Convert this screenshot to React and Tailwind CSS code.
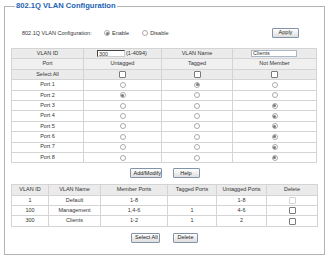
import React from 'react';

const Radio = ({ checked }) => (
  <span className="inline-flex items-center justify-center w-[6px] h-[6px] rounded-full border border-[#ababab] bg-white align-middle">
    {checked && <span className="w-[3px] h-[3px] rounded-full bg-[#7a7a7a]" />}
  </span>
);

const Check = ({ disabled }) => (
  <span
    className={`inline-block w-[7px] h-[7px] rounded-[1px] border bg-white align-middle ${
      disabled ? 'border-[#d4d4d4]' : 'border-[#7a7a7a]'
    }`}
  />
);

const Btn = ({ children, className = '' }) => (
  <button
    className={`h-[10px] px-[3px] whitespace-nowrap border border-[#8394a8] rounded-[1px] bg-gradient-to-b from-white to-[#dedede] text-[5.5px] leading-none text-[#222] ${className}`}
  >
    {children}
  </button>
);

// which column each port is in: 0 untagged, 1 tagged, 2 not member
const ports = [1, 0, 2, 2, 2, 2, 2, 2];

const vlans = [
  { id: '1', name: 'Default', members: '1-8', tagged: '', untagged: '1-8', locked: true },
  { id: '100', name: 'Management', members: '1,4-6', tagged: '1', untagged: '4-6' },
  { id: '300', name: 'Clients', members: '1-2', tagged: '1', untagged: '2' },
];

const td = 'border border-[#d4d4d4] h-[10.4px] p-0 text-center align-middle';

const App = () => {
  return (
    <div className="w-[328px] h-[262px] bg-white pl-[4px] pr-[6px] pt-0 font-['Liberation_Sans',Arial,sans-serif] text-[#333]">
      <fieldset className="border border-[#b4b4b4] h-[255px] px-[6px] pt-0">
        <legend className="ml-[4px] px-[1px] text-[7.6px] font-bold leading-[12px] text-[#1d63b3]">
          802.1Q VLAN Configuration
        </legend>

        <div className="flex items-center h-[10px] mt-[16px] text-[5.5px] text-[#333]">
          <span className="ml-[11px] w-[82px]">802.1Q VLAN Configuration:</span>
          <span className="flex items-center gap-[2px]">
            <Radio checked />
            <span>Enable</span>
          </span>
          <span className="flex items-center gap-[2px] ml-[13px]">
            <Radio />
            <span>Disable</span>
          </span>
          <Btn className="ml-auto mr-[19px] w-[27px]">Apply</Btn>
        </div>

        <table className="mt-[10px] border-collapse table-fixed w-[305px] text-[5.5px] leading-none">
          <colgroup>
            <col className="w-[72px]" />
            <col className="w-[78px]" />
            <col className="w-[71px]" />
            <col className="w-[84px]" />
          </colgroup>
          <tbody>
            <tr className="bg-[#ebebeb]">
              <td className={td}>VLAN ID</td>
              <td className={`${td} text-left pl-[13px]`}>
                <span className="inline-flex items-center">
                  <span className="inline-block w-[28px] h-[7px] border-t border-l border-[#444] border-r border-b border-r-[#ccc] border-b-[#ccc] bg-white text-left pl-[1px] leading-[6px]">
                    300
                  </span>
                  <span className="ml-[1px]">(1-4094)</span>
                </span>
              </td>
              <td className={td}>VLAN Name</td>
              <td className={`${td} text-left pl-[18px]`}>
                <span className="inline-block w-[46px] h-[7px] border border-[#a9b7c6] bg-white text-left pl-[1px] leading-[5px]">
                  Clients
                </span>
              </td>
            </tr>
            <tr className="bg-[#f0f0f0]">
              <td className={td}>Port</td>
              <td className={td}>Untagged</td>
              <td className={td}>Tagged</td>
              <td className={td}>Not Member</td>
            </tr>
            <tr className="bg-[#ebebeb]">
              <td className={td}>Select All</td>
              <td className={td}><Check /></td>
              <td className={td}><Check /></td>
              <td className={td}><Check /></td>
            </tr>
            {ports.map((sel, i) => (
              <tr key={i} className="bg-white">
                <td className={td}>Port {i + 1}</td>
                <td className={td}><Radio checked={sel === 0} /></td>
                <td className={td}><Radio checked={sel === 1} /></td>
                <td className={td}><Radio checked={sel === 2} /></td>
              </tr>
            ))}
          </tbody>
        </table>

        <div className="flex justify-center gap-[11px] mt-[5px]">
          <Btn className="w-[32px]">Add/Modify</Btn>
          <Btn className="w-[27px]">Help</Btn>
        </div>

        <table className="mt-[6px] border-collapse table-fixed w-[306px] text-[5.5px] leading-none">
          <colgroup>
            <col className="w-[37px]" />
            <col className="w-[52px]" />
            <col className="w-[67px]" />
            <col className="w-[49px]" />
            <col className="w-[50px]" />
            <col className="w-[51px]" />
          </colgroup>
          <tbody>
            <tr className="bg-[#ebebeb]">
              <td className={td}>VLAN ID</td>
              <td className={td}>VLAN Name</td>
              <td className={td}>Member Ports</td>
              <td className={td}>Tagged Ports</td>
              <td className={td}>Untagged Ports</td>
              <td className={td}>Delete</td>
            </tr>
            {vlans.map((v) => (
              <tr key={v.id} className="bg-white">
                <td className={td}>{v.id}</td>
                <td className={td}>{v.name}</td>
                <td className={td}>{v.members}</td>
                <td className={td}>{v.tagged}</td>
                <td className={td}>{v.untagged}</td>
                <td className={td}><Check disabled={v.locked} /></td>
              </tr>
            ))}
          </tbody>
        </table>

        <div className="flex justify-center gap-[13px] mt-[6px]">
          <Btn className="w-[29px]">Select All</Btn>
          <Btn className="w-[25px]">Delete</Btn>
        </div>
      </fieldset>
    </div>
  );
};

export default App;
